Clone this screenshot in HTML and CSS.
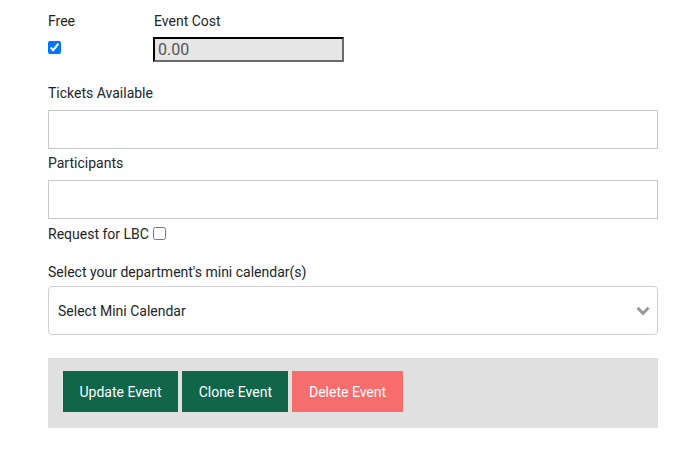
FILE: index.html
```html
<!DOCTYPE html>
<html lang="en">
<head>
    <meta charset="UTF-8">
    <title>Edit Event</title>
    <link rel="stylesheet" href="styles.css">
</head>
<body>
    <div class="container">
        <div class="cost-row">
            <div class="free-col">
                <label class="label" for="free">Free</label>
                <input type="checkbox" id="free" class="check" checked>
            </div>
            <div class="cost-col">
                <label class="label" for="cost">Event Cost</label>
                <input type="text" id="cost" class="cost-input" value="0.00" disabled>
            </div>
        </div>

        <div class="form-group">
            <label class="label" for="tickets">Tickets Available</label>
            <input type="text" id="tickets" class="text-input">
        </div>

        <div class="form-group">
            <label class="label" for="participants">Participants</label>
            <input type="text" id="participants" class="text-input">
        </div>

        <div class="lbc-row">
            <label class="label" for="lbc">Request for LBC</label>
            <input type="checkbox" id="lbc" class="check">
        </div>

        <div class="form-group calendar-group">
            <label class="label" for="calendar">Select your department's mini calendar(s)</label>
            <div class="select-box" id="calendar">
                <span>Select Mini Calendar</span>
                <svg class="chevron" width="14" height="10" viewBox="0 0 14 10">
                    <path d="M1.5 1.8 L7 7.3 L12.5 1.8" fill="none" stroke="#999" stroke-width="3"/>
                </svg>
            </div>
        </div>

        <div class="actions">
            <button class="btn btn-green">Update Event</button>
            <button class="btn btn-green">Clone Event</button>
            <button class="btn btn-red">Delete Event</button>
        </div>
    </div>
</body>
</html>
```

FILE: styles.css
```css
body {
    margin: 0;
    font-family: Roboto, 'Liberation Sans', sans-serif;
    font-size: 14px;
    color: #212529;
    background: #ffffff;
}

.container {
    width: 610px;
    padding: 11px 0 0 48px;
}

.label {
    display: block;
    line-height: 20px;
}

.cost-row {
    display: flex;
}

.free-col {
    width: 105px;
}

.free-col .check {
    margin: 10px 0 0 0;
}

.check {
    width: 13px;
    height: 13px;
    accent-color: #0075ff;
}

.cost-col .label {
    padding-left: 1px;
}

.cost-input {
    box-sizing: border-box;
    width: 191px;
    height: 25px;
    margin-top: 6px;
    padding: 0 3px;
    border: 2px inset #767676;
    border-top-color: #222;
    border-left-color: #222;
    border-right-color: #6b6b6b;
    border-bottom-color: #6b6b6b;
    background: #e6e6e6;
    font-family: Roboto, 'Liberation Sans', sans-serif;
    font-size: 16px;
    color: #555;
}

.form-group {
    margin-top: 4px;
}

.cost-row + .form-group {
    margin-top: 21px;
}

.form-group .label {
    margin-bottom: 7px;
}

.text-input {
    display: block;
    box-sizing: border-box;
    width: 610px;
    height: 39px;
    border: 1px solid #c8c8c8;
    margin: 0;
}

.lbc-row {
    display: flex;
    align-items: center;
    margin-top: 5px;
}

.lbc-row .check {
    margin: 0 0 2px 4px;
}

.calendar-group {
    margin-top: 18px;
}

.calendar-group .label {
    margin-bottom: 4px;
}

.select-box {
    box-sizing: border-box;
    height: 49px;
    border: 1px solid #d0d0d0;
    border-radius: 4px;
    display: flex;
    align-items: center;
    justify-content: space-between;
    padding: 0 7px 0 9px;
}

.actions {
    margin-top: 23px;
    background: #e0e0e0;
    height: 70px;
    box-sizing: border-box;
    padding: 13px 15px 0;
    display: flex;
    align-items: flex-start;
    gap: 4px;
}

.btn {
    height: 41px;
    padding: 0 16.5px;
    border: none;
    font-family: Roboto, 'Liberation Sans', sans-serif;
    font-size: 14px;
    color: #ffffff;
    cursor: pointer;
}

.btn-green {
    background: #11664a;
}

.btn-red {
    background: #f76d6d;
}
```
